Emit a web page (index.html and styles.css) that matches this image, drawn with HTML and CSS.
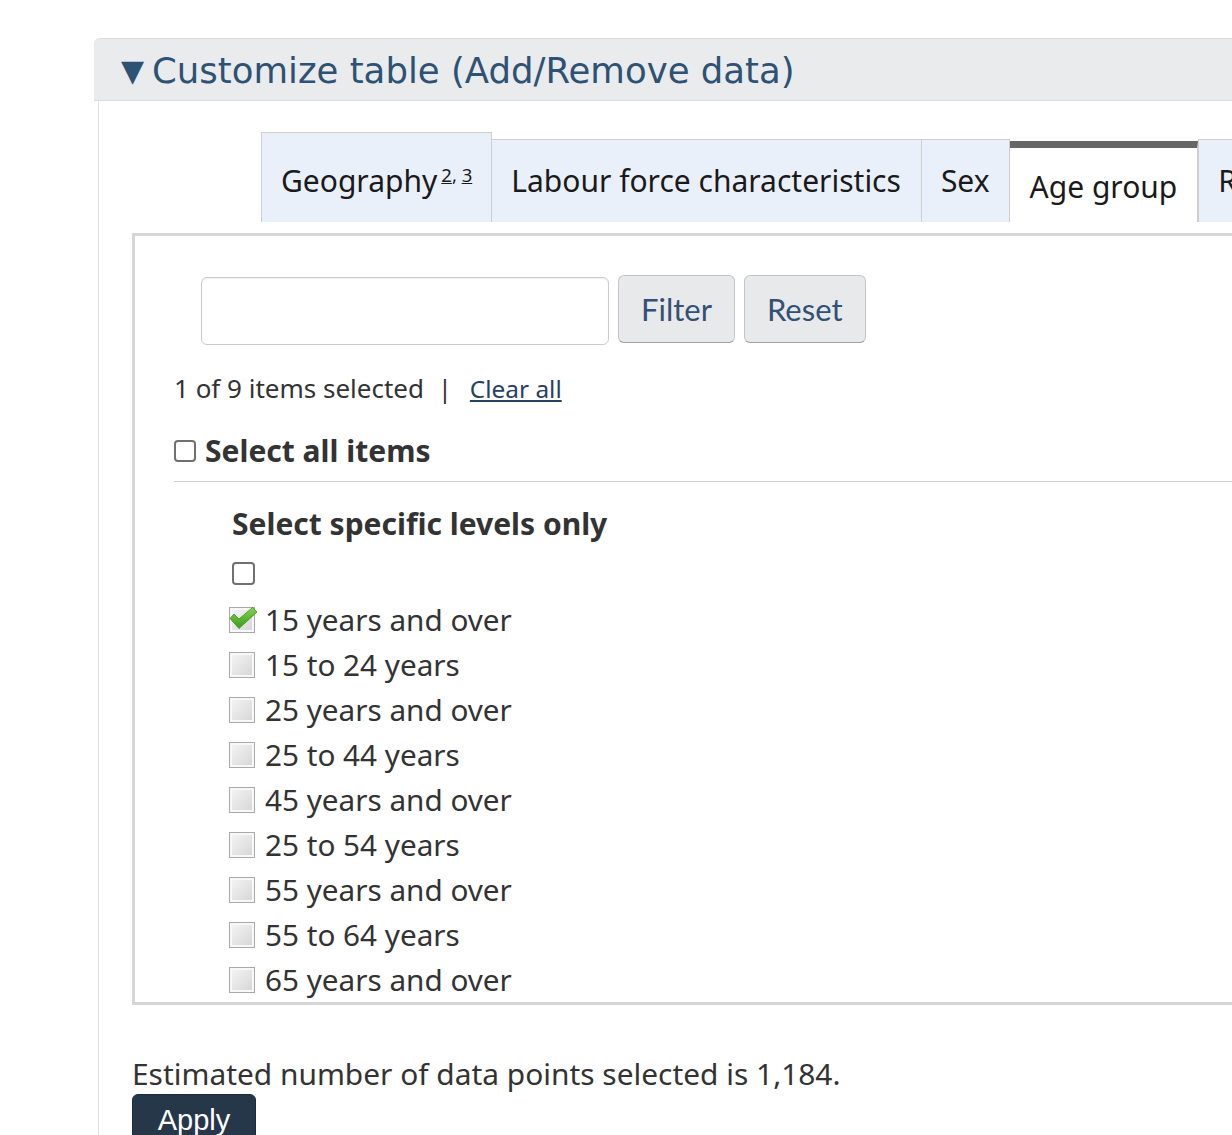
FILE: index.html
```html
<!DOCTYPE html>
<html lang="en">
<head>
<meta charset="utf-8">
<title>Customize table</title>
<link rel="stylesheet" href="styles.css">
</head>
<body>
<div class="page">
  <div class="details">
    <div class="summary"><span class="tri">&#9660;</span>Customize table (Add/Remove data)</div>
    <div class="details-body">
      <div class="tabs">
        <div class="tab tab-geo">Geography<span class="sup"><a href="#">2</a>, <a href="#">3</a></span></div>
        <div class="tab tab-wide">Labour force characteristics</div>
        <div class="tab">Sex</div>
        <div class="tab tab-active">Age group</div>
        <div class="tab tab-cut">R</div>
      </div>
      <div class="panel">
        <div class="filter-row">
          <input class="filter-input" type="text" aria-label="Filter">
          <button class="btn">Filter</button>
          <button class="btn">Reset</button>
        </div>
        <div class="status">1 of 9 items selected <span class="sep">|</span> <a href="#" class="clear">Clear all</a></div>
        <label class="select-all"><span class="cb"></span>Select all items</label>
        <div class="levels">
          <div class="levels-title">Select specific levels only</div>
          <div class="level-cb"><span class="cb"></span></div>
          <ul class="items">
            <li class="item"><span class="imgcb checked"><svg viewBox="0 0 30 30" width="30" height="30"><defs><linearGradient id="g" x1="0" y1="0" x2="0" y2="1"><stop offset="0" stop-color="#7fd34e"/><stop offset="1" stop-color="#3f9a1c"/></linearGradient></defs><path d="M2 13.5 L6 9 L11 14 L24.5 2.5 L29 7 L11 23.5 Z" fill="url(#g)" stroke="#3d8f1f" stroke-width="0.8" stroke-linejoin="round"/></svg></span>15 years and over</li>
            <li class="item"><span class="imgcb"></span>15 to 24 years</li>
            <li class="item"><span class="imgcb"></span>25 years and over</li>
            <li class="item"><span class="imgcb"></span>25 to 44 years</li>
            <li class="item"><span class="imgcb"></span>45 years and over</li>
            <li class="item"><span class="imgcb"></span>25 to 54 years</li>
            <li class="item"><span class="imgcb"></span>55 years and over</li>
            <li class="item"><span class="imgcb"></span>55 to 64 years</li>
            <li class="item"><span class="imgcb"></span>65 years and over</li>
          </ul>
        </div>
      </div>
      <p class="estimate">Estimated number of data points selected is 1,184.</p>
      <button class="apply">Apply</button>
    </div>
  </div>
</div>
</body>
</html>
```
FILE: styles.css
```css
html, body {
  margin: 0;
  padding: 0;
  background: #fff;
  overflow: hidden;
}
body {
  font-family: "Noto Sans", "Open Sans", sans-serif;
  color: #333;
}
.page {
  padding: 38px 0 0 94px;
  width: 1400px;
}
.summary {
  height: 63px;
  box-sizing: border-box;
  background: #eaebed;
  border-top: 1px solid #dcdcdc;
  border-bottom: 1px solid #dcdcdc;
  border-radius: 6px 0 0 0;
  font-family: "DejaVu Sans", sans-serif;
  font-size: 35.5px;
  color: #2e5274;
  display: flex;
  align-items: center;
  padding-left: 27px;
  padding-top: 1px;
}
.tri {
  font-size: 30px;
  margin-right: 8px;
}
.details-body {
  margin-left: 4px;
  border-left: 1px solid #e2e2e2;
  padding: 31px 0 0 33px;
  height: 1100px;
}
.tabs {
  display: flex;
  align-items: flex-end;
  padding-left: 129px;
  margin-bottom: 11px;
}
.tab {
  box-sizing: border-box;
  height: 83px;
  background: #eaf0fa;
  border: 1px solid #cfcfcf;
  border-bottom: none;
  padding: 0 19px;
  font-size: 30px;
  color: #1a1a1a;
  display: flex;
  align-items: center;
  padding-bottom: 1px;
  margin-left: -1px;
  white-space: nowrap;
}
.tab:first-child { margin-left: 0; }
.tab-wide { padding-right: 20px; }
.tab-geo {
  height: 90px;
  padding-top: 6px;
}
.sup {
  font-size: 18.5px;
  position: relative;
  top: -6px;
  margin-left: 4px;
}
.sup a { color: #1a1a1a; }
.tab-active {
  background: #fff;
  border: none;
  border-top: 7px solid #666;
  height: 81px;
  padding: 2px 20px 0 20px;
  margin-left: 0;
  border-right: 1px solid #cfcfcf;
}
.tab-cut {
  margin-left: 0;
  border-left: 1px solid #cfcfcf;
  padding-right: 40px;
}
.panel {
  border: 3px solid #d6d6d6;
  border-right: none;
  height: 766px;
  box-sizing: content-box;
  padding: 0 0 0 39px;
}
.filter-row {
  display: flex;
  align-items: center;
  margin-top: 39px;
  margin-left: 27px;
  height: 70px;
}
.filter-input {
  box-sizing: border-box;
  width: 408px;
  height: 68px;
  border: 1px solid #cccccc;
  border-radius: 6px;
  box-shadow: inset 0 1px 2px rgba(0,0,0,0.06);
  margin: 2px 9px 0 0;
  background: #fff;
}
.btn {
  font-family: "Lato", sans-serif;
  font-size: 31px;
  color: #335075;
  background: #e8e9eb;
  border: 1px solid #c5c5c5;
  border-bottom-color: #a0a0a0;
  border-radius: 6px;
  height: 68px;
  padding: 0 22px;
  margin: -2px 9px 0 0;
  box-sizing: border-box;
}
.status {
  margin-top: 25px;
  font-size: 26px;
  line-height: 36px;
  color: #333;
}
.sep { margin: 0 11px 0 7px; }
.clear { color: #284162; font-size: 24.4px; }
.select-all {
  display: flex;
  align-items: center;
  margin-top: 25px;
  font-size: 30px;
  font-weight: bold;
  color: #333;
  line-height: 38px;
  padding-bottom: 11px;
  border-bottom: 1px solid #cfcfcf;
}
.cb {
  display: inline-block;
  box-sizing: border-box;
  width: 22px;
  height: 22px;
  border: 2px solid #707070;
  border-radius: 4px;
  background: #fff;
  margin-right: 9px;
}
.levels {
  padding-left: 58px;
}
.levels-title {
  margin-top: 22px;
  font-size: 30px;
  font-weight: bold;
  line-height: 40px;
  color: #333;
}
.level-cb {
  margin-top: 17px;
  height: 24px;
  display: flex;
  align-items: center;
}
.level-cb .cb { margin-right: 0; width: 23px; height: 23px; }
.items {
  list-style: none;
  margin: 12px 0 0 -3px;
  padding: 0;
}
.item {
  height: 45px;
  display: flex;
  align-items: center;
  font-size: 29.7px;
  color: #333;
}
.imgcb {
  position: relative;
  display: inline-block;
  box-sizing: border-box;
  width: 26px;
  height: 26px;
  border: 1px solid #a9a9a9;
  background: linear-gradient(135deg, #f6f6f6 0%, #e2e2e2 60%, #d4d4d4 100%);
  box-shadow: inset 0 0 0 2px #f8f8f8;
  margin-right: 10px;
  flex: none;
}
.imgcb svg {
  position: absolute;
  left: -2px;
  top: -3px;
}
.estimate {
  margin: 49px 0 0 0;
  font-size: 29.9px;
  line-height: 40px;
  color: #333;
}
.apply {
  margin-top: 0;
  background: #26374a;
  color: #fff;
  border: 1px solid #1c2b3b;
  border-radius: 6px;
  font-family: "Liberation Sans", Arial, sans-serif;
  font-size: 29px;
  height: 60px;
  width: 124px;
  text-align: center;
  padding: 0 0 8px 0;
}
```
